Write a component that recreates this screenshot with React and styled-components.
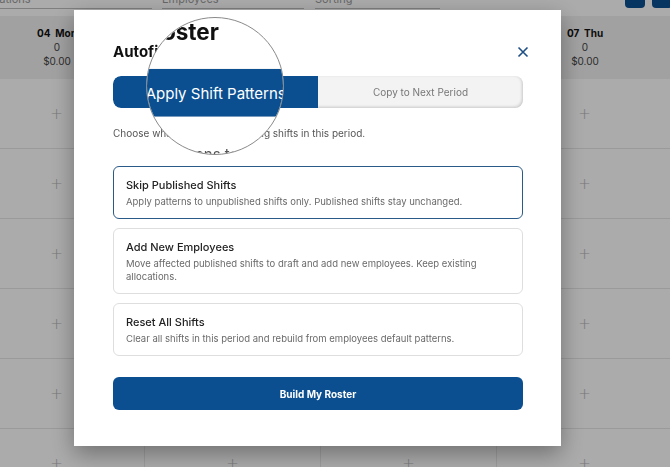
import styled, { createGlobalStyle } from 'styled-components';

const GlobalStyle = createGlobalStyle`
  html, body {
    margin: 0;
    padding: 0;
  }
  body {
    font-family: Inter, "Open Sans", sans-serif;
    background: #fff;
    overflow: hidden;
  }
  * {
    box-sizing: border-box;
  }
`;

const BLUE = '#0b4f91';

const days = ['04  Mon', '05  Tue', '06  Wed', '07  Thu'];
const rows = [0, 1, 2, 3, 4, 5];

const options = [
  {
    title: 'Skip Published Shifts',
    text: 'Apply patterns to unpublished shifts only. Published shifts stay unchanged.',
    selected: true,
  },
  {
    title: 'Add New Employees',
    text: 'Move affected published shifts to draft and add new employees. Keep existing allocations.',
  },
  {
    title: 'Reset All Shifts',
    text: 'Clear all shifts in this period and rebuild from employees default patterns.',
  },
];

const Page = styled.div`
  width: 670px;
  height: 467px;
  overflow: hidden;
  background: #fff;
`;

const TopBar = styled.div`
  display: flex;
  align-items: flex-start;
  height: 16px;
  margin-left: -20px;
  margin-right: -2px;
`;

const Field = styled.div`
  width: ${(p) => p.$w}px;
  margin-right: ${(p) => p.$gap || 0}px;
  height: 9px;
  overflow: hidden;
  border-bottom: 1px solid #bdbdbd;
  font-size: 11px;
  color: #9a9a9a;
`;

const FieldLabel = styled.span`
  display: block;
  line-height: 14px;
  margin-top: -8px;
`;

const Spacer = styled.div`
  flex: 1;
`;

const IconBtn = styled.div`
  width: 20px;
  height: 20px;
  margin-top: -12px;
  margin-left: 7px;
  border-radius: 4px;
  background: ${BLUE};
`;

const HeadRow = styled.div`
  display: grid;
  grid-template-columns: repeat(4, 176px);
  margin-left: -31px;
  height: 63px;
  background: #f1f1f1;
`;

const DayCell = styled.div`
  display: flex;
  flex-direction: column;
  align-items: center;
  padding-top: 10px;
  font-size: 10px;
  line-height: 14px;
  color: #444;
`;

const DayName = styled.span`
  font-weight: 700;
  color: #111;
  white-space: pre;
`;

const GridRow = styled.div`
  display: grid;
  grid-template-columns: repeat(4, 176px);
  margin-left: -31px;
  height: 70px;
  border-bottom: 1px solid #e6e6e6;
`;

const SlotCell = styled.div`
  display: flex;
  align-items: center;
  justify-content: center;
  border-right: 1px solid #eaeaea;
  color: #b4b4b4;
  font-family: "DejaVu Sans", sans-serif;
  font-size: 15px;
  font-weight: 200;
`;

const Overlay = styled.div`
  position: fixed;
  inset: 0;
  background: rgba(0, 0, 0, 0.33);
  padding: 10px 0 0 74px;
`;

const Modal = styled.div`
  position: relative;
  width: 487px;
  height: 436px;
  background: #fff;
  box-shadow: 0 8px 22px rgba(0, 0, 0, 0.35);
  padding: 32px 38px 0 39px;
`;

const Head = styled.div`
  display: flex;
  flex-direction: column;
`;

const TitleRow = styled.div`
  display: flex;
  align-items: center;
  justify-content: space-between;
`;

const Title = styled.h2`
  margin: 0;
  font-size: 15px;
  line-height: 20px;
  font-weight: 700;
  color: #111;
`;

const CloseBtn = styled.button`
  display: flex;
  border: 0;
  padding: 0;
  margin-right: -6px;
  background: none;
  color: #1e4f86;
`;

const Tabs = styled.div`
  display: grid;
  grid-template-columns: 1fr 1fr;
  height: 32px;
  margin-top: 14px;
  border-radius: 8px;
  overflow: hidden;
  background: #f3f3f3;
  box-shadow: inset -1px -1px 3px rgba(0, 0, 0, 0.18);
`;

const Tab = styled.div`
  display: flex;
  align-items: center;
  justify-content: center;
  font-size: 10px;
  color: ${(p) => (p.$active ? '#fff' : '#777')};
  background: ${(p) => (p.$active ? BLUE : 'transparent')};
  border-radius: ${(p) => (p.$active ? '8px 0 0 8px' : '0')};
`;

const Desc = styled.p`
  margin: 18px 0 0;
  font-size: 10px;
  line-height: 14px;
  color: #555;
`;

const OptionList = styled.div`
  display: flex;
  flex-direction: column;
  gap: 9px;
  margin-top: 26px;
`;

const Option = styled.div`
  padding: 11px 12px 10px;
  border-radius: 6px;
  border: ${(p) => (p.$selected ? `1.5px solid #2a5a88` : '1px solid #dedede')};
`;

const OptionTitle = styled.div`
  font-size: 11px;
  line-height: 14px;
  font-weight: 500;
  color: #222;
`;

const OptionText = styled.div`
  margin-top: 3px;
  font-size: 9.5px;
  line-height: 13px;
  color: #6a6a6a;
`;

const BuildBtn = styled.button`
  width: 100%;
  height: 33px;
  margin-top: 21px;
  border: 0;
  border-radius: 6px;
  background: ${BLUE};
  color: #fff;
  font-family: inherit;
  font-size: 10px;
  font-weight: 700;
`;

const Lens = styled.div`
  position: absolute;
  left: 72px;
  top: 7px;
  width: 138px;
  height: 138px;
  border-radius: 50%;
  border: 1px solid #8a8a8a;
  overflow: hidden;
  background: #fff;
`;

const LensContent = styled.div`
  position: absolute;
  left: -73px;
  top: -8px;
  width: 487px;
  padding: 32px 38px 0 39px;
  transform: scale(1.5);
  transform-origin: 141px 81px;
`;

const CloseIcon = () => (
  <svg width="12" height="12" viewBox="0 0 12 12" fill="none">
    <path d="M1.5 1.5 L10.5 10.5 M10.5 1.5 L1.5 10.5" stroke="currentColor" strokeWidth="1.6" />
  </svg>
);

const ModalHead = () => (
  <Head>
    <TitleRow>
      <Title>Autofill Roster</Title>
      <CloseBtn aria-label="Close">
        <CloseIcon />
      </CloseBtn>
    </TitleRow>
    <Tabs>
      <Tab $active>Apply Shift Patterns</Tab>
      <Tab>Copy to Next Period</Tab>
    </Tabs>
    <Desc>Choose what happens to existing shifts in this period.</Desc>
  </Head>
);

const App = () => {
  return (
    <Page>
      <GlobalStyle />
      <TopBar>
        <Field $w={172} $gap={10}>
          <FieldLabel>Locations</FieldLabel>
        </Field>
        <Field $w={142} $gap={11}>
          <FieldLabel>Employees</FieldLabel>
        </Field>
        <Field $w={125}>
          <FieldLabel>Sorting</FieldLabel>
        </Field>
        <Spacer />
        <IconBtn />
        <IconBtn />
      </TopBar>
      <HeadRow>
        {days.map((d) => (
          <DayCell key={d}>
            <DayName>{d}</DayName>
            <span>0</span>
            <span>$0.00</span>
          </DayCell>
        ))}
      </HeadRow>
      {rows.map((r) => (
        <GridRow key={r}>
          {days.map((d) => (
            <SlotCell key={d}>+</SlotCell>
          ))}
        </GridRow>
      ))}

      <Overlay>
        <Modal>
          <ModalHead />
          <OptionList>
            {options.map((o) => (
              <Option key={o.title} $selected={o.selected}>
                <OptionTitle>{o.title}</OptionTitle>
                <OptionText>{o.text}</OptionText>
              </Option>
            ))}
          </OptionList>
          <BuildBtn>Build My Roster</BuildBtn>
          <Lens>
            <LensContent>
              <ModalHead />
            </LensContent>
          </Lens>
        </Modal>
      </Overlay>
    </Page>
  );
};

export default App;
